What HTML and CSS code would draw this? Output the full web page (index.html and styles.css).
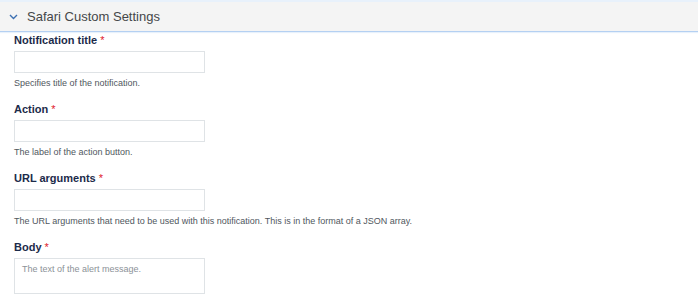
FILE: index.html
```html
<!DOCTYPE html>
<html lang="en">
<head>
    <meta charset="UTF-8">
    <meta name="viewport" content="width=device-width, initial-scale=1.0">
    <title>Safari Custom Settings</title>
    <link rel="stylesheet" href="styles.css">
</head>
<body>

<div class="panel">
    <div class="panel-header">
        <svg class="chevron" width="9" height="6" viewBox="0 0 9 6">
            <path d="M1 1 L4.5 4.5 L8 1" fill="none" stroke="#3d70b2" stroke-width="1.4"/>
        </svg>
        <span class="panel-title">Safari Custom Settings</span>
    </div>

    <div class="panel-body">
        <div class="field">
            <label>Notification title <span class="req">*</span></label>
            <input type="text" class="text-input">
            <div class="help">Specifies title of the notification.</div>
        </div>

        <div class="field">
            <label>Action <span class="req">*</span></label>
            <input type="text" class="text-input">
            <div class="help">The label of the action button.</div>
        </div>

        <div class="field">
            <label>URL arguments <span class="req">*</span></label>
            <input type="text" class="text-input">
            <div class="help">The URL arguments that need to be used with this notification. This is in the format of a JSON array.</div>
        </div>

        <div class="field">
            <label>Body <span class="req">*</span></label>
            <textarea class="text-area" placeholder="The text of the alert message."></textarea>
        </div>
    </div>
</div>

</body>
</html>
```

FILE: styles.css
```css
body {
    font-family: "Liberation Sans", Arial, sans-serif;
    background-color: #fff;
    margin: 0;
    padding: 0;
}

.panel-header {
    display: flex;
    align-items: center;
    height: 29px;
    padding-left: 9px;
    background-color: #f4f4f4;
    border-top: 2px solid #e8f1fb;
    border-bottom: 1px solid #b4d0f2;
    box-shadow: 0 1px 1px #e8f1fb;
}

.chevron {
    margin-right: 9px;
    margin-top: 1px;
}

.panel-title {
    font-size: 13px;
    color: #444749;
}

.panel-body {
    padding: 1px 14px 0;
}

.field {
    display: flex;
    flex-direction: column;
    align-items: flex-start;
    margin-bottom: 13px;
}

.field label {
    font-size: 11px;
    font-weight: bold;
    line-height: 14px;
    color: #1c2b4a;
    margin-bottom: 4px;
}

.req {
    color: #e0182d;
    font-weight: normal;
}

.text-input {
    box-sizing: border-box;
    width: 191px;
    height: 22px;
    border: 1px solid #dfe3e6;
    margin: 0;
}

.text-area {
    box-sizing: border-box;
    width: 191px;
    height: 36px;
    border: 1px solid #dfe3e6;
    margin: 0;
    padding: 5px 7px;
    resize: none;
    font-family: "Liberation Sans", Arial, sans-serif;
    font-size: 9px;
}

.text-area::placeholder {
    color: #8c9298;
}

.help {
    margin-top: 4px;
    font-size: 9px;
    line-height: 12px;
    color: #50575e;
}
```
